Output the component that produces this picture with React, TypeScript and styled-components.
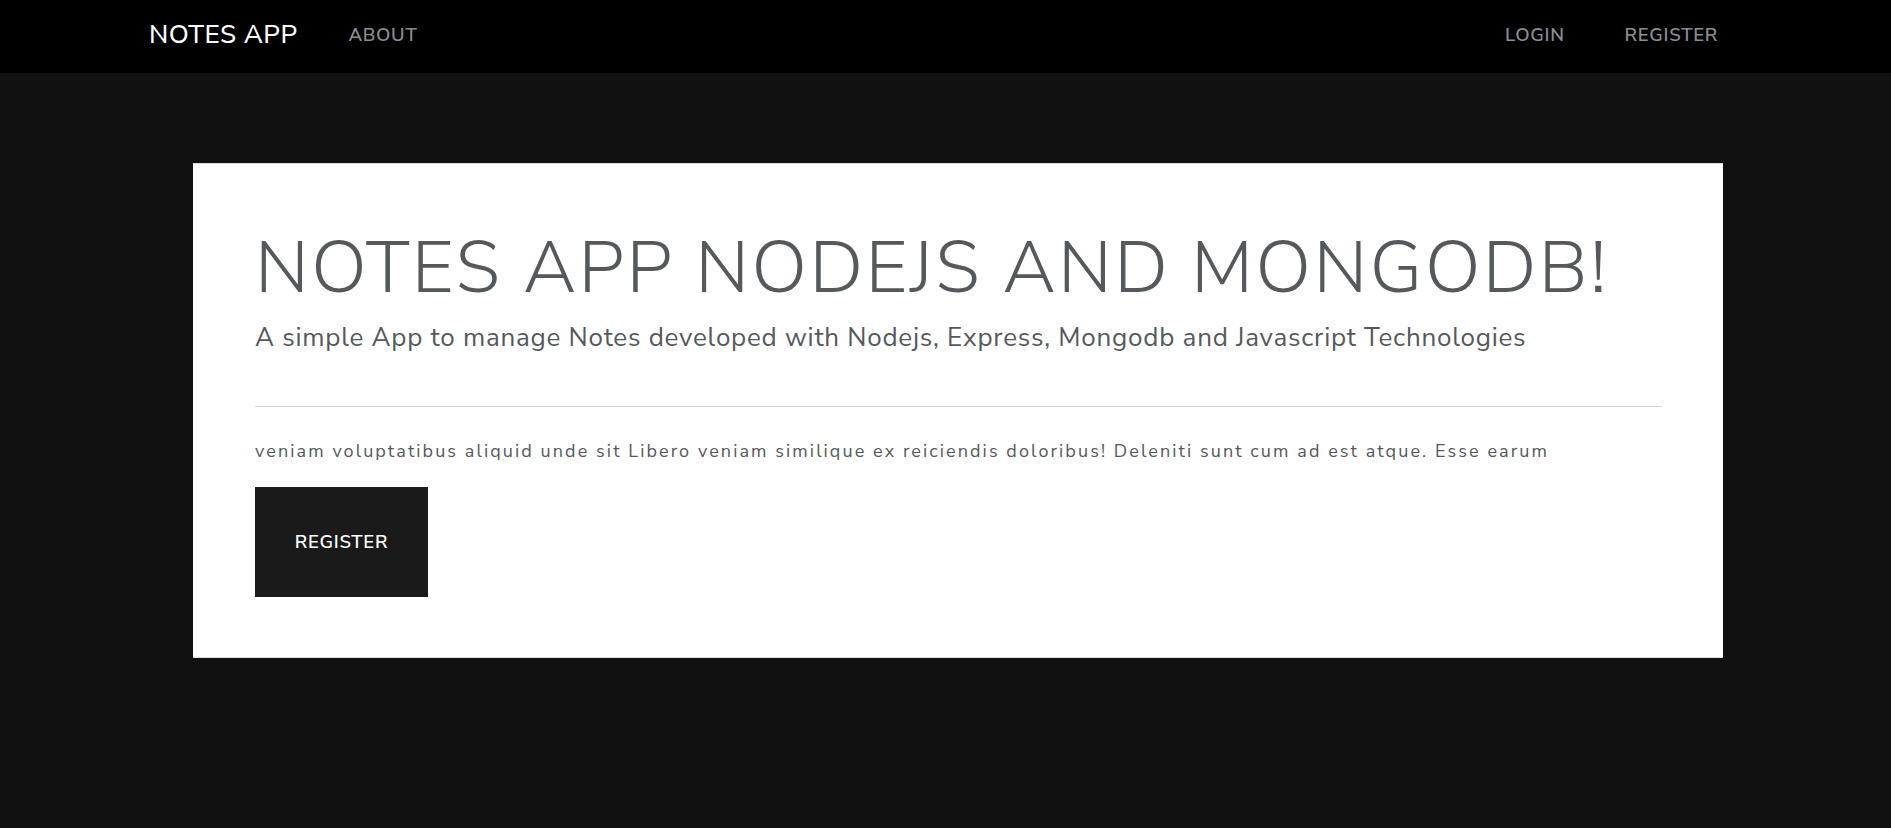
import React from "react";
import styled, { createGlobalStyle } from "styled-components";

const Global = createGlobalStyle`
  html, body { margin: 0; padding: 0; }
  body {
    background: #111111;
    font-family: "Nunito Sans", "Lato", "Noto Sans", sans-serif;
    color: #55595c;
    min-height: 828px;
  }
  * { box-sizing: border-box; }
`;

const NavBar = styled.nav`
  display: flex;
  align-items: center;
  height: 73px;
  padding: 0 173px 4px 149px;
  background: #000000;
`;

const Brand = styled.a`
  font-size: 26px;
  font-weight: 500;
  color: #ffffff;
  letter-spacing: 0.5px;
  text-decoration: none;
  white-space: nowrap;
`;

const NavGroup = styled.div<{ $right?: boolean; $gap: number }>`
  display: flex;
  align-items: center;
  gap: ${(p) => p.$gap}px;
  margin-left: ${(p) => (p.$right ? "auto" : "51px")};
`;

const NavLink = styled.a`
  font-size: 18.5px;
  font-weight: 600;
  letter-spacing: 0.7px;
  color: #8a8d90;
  text-transform: uppercase;
  text-decoration: none;
  white-space: nowrap;
`;

const Main = styled.main`
  padding: 90px 168px 120px 193px;
`;

const Card = styled.section`
  background: #ffffff;
  border-top: 1px solid #dcdcdc;
  border-bottom: 1px solid #dcdcdc;
  padding: 61px 61px 60px 62px;
`;

const Title = styled.h1`
  margin: 0;
  font-size: 73px;
  font-weight: 300;
  line-height: 1.2;
  letter-spacing: 2.5px;
  color: #55595c;
  white-space: nowrap;
`;

const Lead = styled.p`
  margin: 5px 0 0;
  font-size: 26px;
  font-weight: 400;
  line-height: 1.5;
  letter-spacing: 0.76px;
  color: #55595c;
  white-space: nowrap;
`;

const Rule = styled.hr`
  margin: 49px 0 0;
  border: 0;
  border-top: 1px solid #d6d6d6;
`;

const Body = styled.p`
  margin: 31px 0 0;
  font-size: 18px;
  line-height: 1.5;
  letter-spacing: 2.1px;
  color: #55595c;
  white-space: nowrap;
`;

const Button = styled.a`
  display: inline-flex;
  align-items: center;
  justify-content: center;
  margin-top: 22px;
  width: 173px;
  height: 110px;
  background: #1a1a1a;
  color: #ffffff;
  font-size: 18.5px;
  font-weight: 600;
  letter-spacing: 0.7px;
  text-transform: uppercase;
  text-decoration: none;
`;

const Actions = styled.div`
  display: flex;
`;

export default function App() {
  return (
    <>
      <Global />
      <NavBar>
        <Brand href="#">NOTES APP</Brand>
        <NavGroup $gap={0}>
          <NavLink href="#">About</NavLink>
        </NavGroup>
        <NavGroup $right $gap={60}>
          <NavLink href="#">Login</NavLink>
          <NavLink href="#">Register</NavLink>
        </NavGroup>
      </NavBar>
      <Main>
        <Card>
          <Title>NOTES APP NODEJS AND MONGODB!</Title>
          <Lead>
            A simple App to manage Notes developed with Nodejs, Express, Mongodb and Javascript Technologies
          </Lead>
          <Rule />
          <Body>
            veniam voluptatibus aliquid unde sit Libero veniam similique ex reiciendis doloribus! Deleniti sunt cum
            ad est atque. Esse earum
          </Body>
          <Actions>
            <Button href="#">Register</Button>
          </Actions>
        </Card>
      </Main>
    </>
  );
}
